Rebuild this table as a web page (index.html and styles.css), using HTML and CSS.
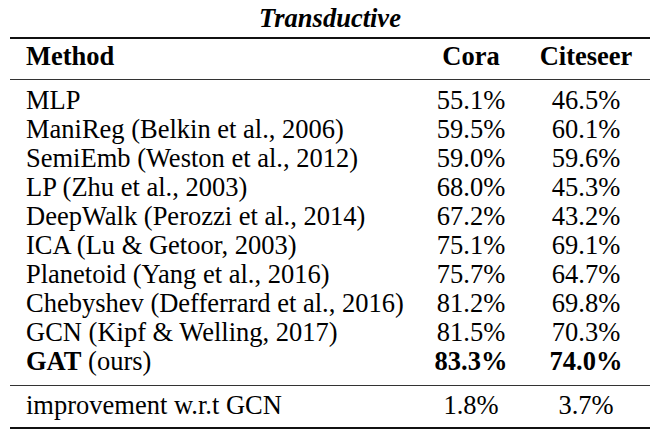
FILE: index.html
```html
<!DOCTYPE html>
<html>
<head>
<meta charset="utf-8">
<link rel="stylesheet" href="styles.css">
</head>
<body>
<div class="page">
  <div class="caption">Transductive</div>
  <div class="table">
    <div class="row head">
      <div class="method">Method</div>
      <div class="num">Cora</div>
      <div class="num">Citeseer</div>
    </div>
    <div class="body">
      <div class="row"><div class="method">MLP</div><div class="num">55.1%</div><div class="num">46.5%</div></div>
      <div class="row"><div class="method">ManiReg (Belkin et al., 2006)</div><div class="num">59.5%</div><div class="num">60.1%</div></div>
      <div class="row"><div class="method">SemiEmb (Weston et al., 2012)</div><div class="num">59.0%</div><div class="num">59.6%</div></div>
      <div class="row"><div class="method">LP (Zhu et al., 2003)</div><div class="num">68.0%</div><div class="num">45.3%</div></div>
      <div class="row"><div class="method">DeepWalk (Perozzi et al., 2014)</div><div class="num">67.2%</div><div class="num">43.2%</div></div>
      <div class="row"><div class="method">ICA (Lu &amp; Getoor, 2003)</div><div class="num">75.1%</div><div class="num">69.1%</div></div>
      <div class="row"><div class="method">Planetoid (Yang et al., 2016)</div><div class="num">75.7%</div><div class="num">64.7%</div></div>
      <div class="row"><div class="method">Chebyshev (Defferrard et al., 2016)</div><div class="num">81.2%</div><div class="num">69.8%</div></div>
      <div class="row"><div class="method">GCN (Kipf &amp; Welling, 2017)</div><div class="num">81.5%</div><div class="num">70.3%</div></div>
      <div class="row"><div class="method"><b>GAT</b> (ours)</div><div class="num"><b>83.3%</b></div><div class="num"><b>74.0%</b></div></div>
    </div>
    <div class="row foot">
      <div class="method">improvement w.r.t GCN</div>
      <div class="num">1.8%</div>
      <div class="num">3.7%</div>
    </div>
  </div>
</div>
</body>
</html>
```
FILE: styles.css
```css
html, body {
  margin: 0;
  padding: 0;
  background: #fff;
}
.page {
  width: 640px;
  padding: 4px 18px 0 10px;
  font-family: "Liberation Serif", "Times New Roman", serif;
  font-size: 26.5px;
  line-height: 29px;
  color: #000;
}
.caption {
  text-align: center;
  font-weight: bold;
  font-style: italic;
  padding-bottom: 4px;
}
.table {
  border-top: 2px solid #111;
  border-bottom: 2px solid #111;
}
.row {
  display: grid;
  grid-template-columns: 1fr 102px 128px;
}
.method {
  padding-left: 16px;
  white-space: nowrap;
}
.num {
  text-align: center;
  white-space: nowrap;
}
.head {
  font-weight: bold;
  padding: 3px 0 8px;
  border-bottom: 1px solid #333;
}
.body {
  padding: 6px 0 9px;
  border-bottom: 1px solid #333;
}
.foot {
  padding: 5px 0 7px;
}
```
